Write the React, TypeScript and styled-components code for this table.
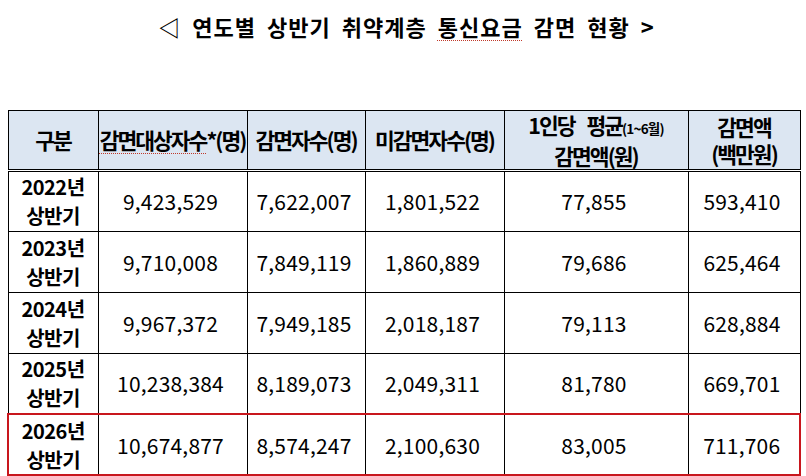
import React from "react";
import styled, { createGlobalStyle } from "styled-components";

const Global = createGlobalStyle`
  html, body { margin: 0; padding: 0; background: #fff; }
  body { font-family: "Noto Sans CJK KR", "Noto Sans", sans-serif; color: #000; }
`;

const Page = styled.div`
  width: 806px;
  height: 476px;
  display: flex;
  flex-direction: column;
  box-sizing: border-box;
  padding: 0 0 0 7px;
`;

const Title = styled.h1`
  margin: 0;
  height: 112px;
  padding-top: 11px;
  box-sizing: border-box;
  text-align: center;
  font-size: 22px;
  font-weight: 700;
  letter-spacing: 1px;
  word-spacing: 5px;
  line-height: 30px;
`;

const Squiggle = styled.span`
  text-decoration: underline dotted #c0392b;
  text-underline-offset: 4px;
  text-decoration-thickness: 1px;
`;

const Table = styled.table`
  border-collapse: collapse;
  table-layout: fixed;
  width: 792px;
`;

const HeadCell = styled.th`
  background: #dce6f2;
  border: 1px solid #000;
  border-bottom: 3px double #000;
  height: 50px;
  padding: 0;
  font-size: 21.5px;
  font-weight: 700;
  letter-spacing: -2px;
  line-height: 27px;
  text-align: center;
  vertical-align: middle;
  white-space: nowrap;
`;

const Gap = styled.span`
  display: inline-block;
  width: 12px;
`;

const Small = styled.span`
  font-size: 13.5px;
  letter-spacing: -0.8px;
`;

const Row = styled.tr<{ $highlight?: boolean }>`
  height: 61px;
  & > td {
    ${(p) => (p.$highlight ? "border-top: 2px solid #c8161d; border-bottom: 2px solid #c8161d;" : "")}
  }
  & > td:first-child {
    ${(p) => (p.$highlight ? "border-left: 2px solid #c8161d;" : "")}
  }
  & > td:last-child {
    ${(p) => (p.$highlight ? "border-right: 2px solid #c8161d;" : "")}
  }
`;

const LabelCell = styled.td`
  border: 1px solid #000;
  padding: 0;
  text-align: center;
  font-size: 20px;
  font-weight: 700;
  line-height: 29px;
  letter-spacing: -0.5px;
`;

const NumCell = styled.td`
  border: 1px solid #000;
  padding: 0 4px 0 0;
  text-align: center;
  font-size: 21px;
  font-weight: 400;
  letter-spacing: 0.2px;
`;

const cols = [90, 149, 118, 139, 184, 112];

const rows = [
  ["2022", "9,423,529", "7,622,007", "1,801,522", "77,855", "593,410"],
  ["2023", "9,710,008", "7,849,119", "1,860,889", "79,686", "625,464"],
  ["2024", "9,967,372", "7,949,185", "2,018,187", "79,113", "628,884"],
  ["2025", "10,238,384", "8,189,073", "2,049,311", "81,780", "669,701"],
  ["2026", "10,674,877", "8,574,247", "2,100,630", "83,005", "711,706"],
];

export default function App() {
  return (
    <>
      <Global />
      <Page>
        <Title>
          ◁ 연도별 상반기 취약계층 <Squiggle>통신요금</Squiggle> 감면 현황 &gt;
        </Title>
        <Table>
          <colgroup>
            {cols.map((w, i) => (
              <col key={i} style={{ width: w }} />
            ))}
          </colgroup>
          <thead>
            <tr>
              <HeadCell>구분</HeadCell>
              <HeadCell>
                <Squiggle>감면대상자수</Squiggle>*(명)
              </HeadCell>
              <HeadCell>감면자수(명)</HeadCell>
              <HeadCell>미감면자수(명)</HeadCell>
              <HeadCell>
                1인당<Gap />평균<Small>(1~6월)</Small>
                <br />
                감면액(원)
              </HeadCell>
              <HeadCell>
                감면액
                <br />
                (백만원)
              </HeadCell>
            </tr>
          </thead>
          <tbody>
            {rows.map((r, i) => (
              <Row key={r[0]} $highlight={i === rows.length - 1}>
                <LabelCell>
                  {r[0]}년
                  <br />
                  상반기
                </LabelCell>
                {r.slice(1).map((v, j) => (
                  <NumCell key={j}>{v}</NumCell>
                ))}
              </Row>
            ))}
          </tbody>
        </Table>
      </Page>
    </>
  );
}
